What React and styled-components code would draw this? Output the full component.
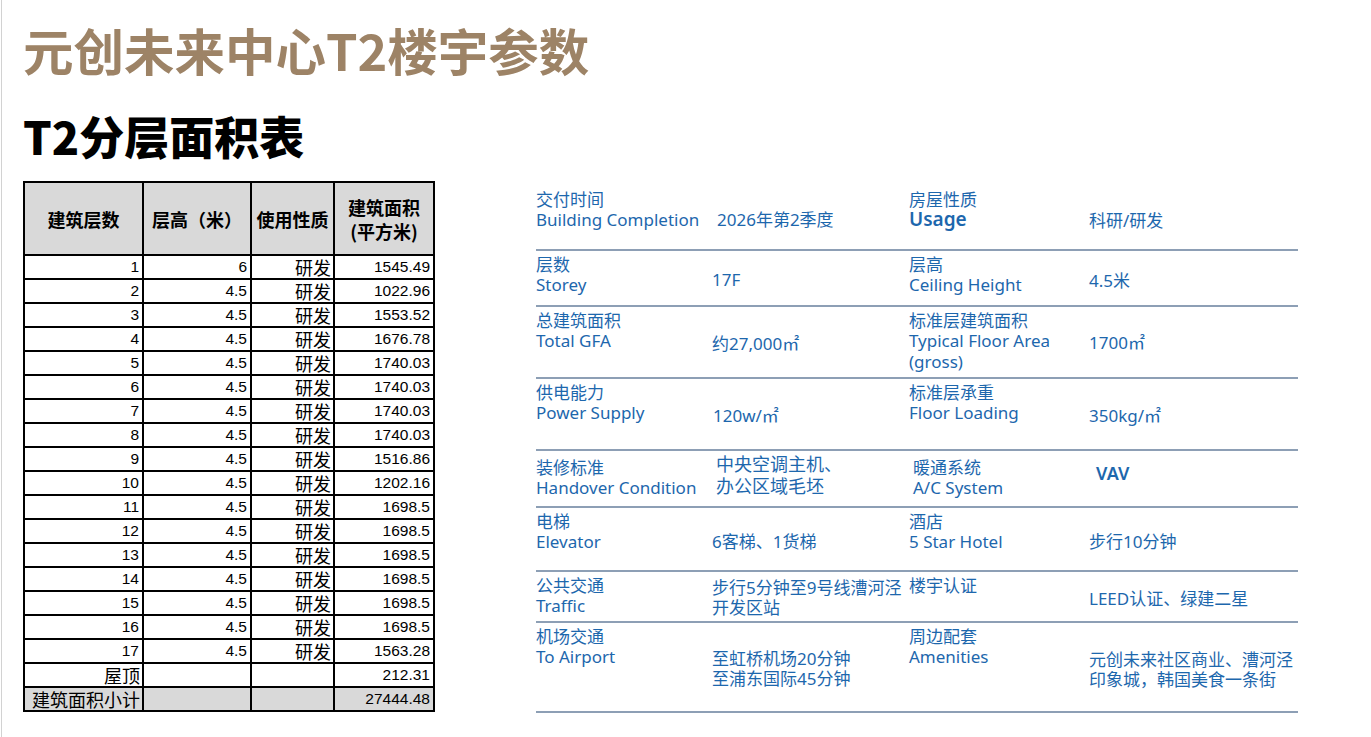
import styled, { createGlobalStyle } from "styled-components"

const GlobalStyle = createGlobalStyle`
    body {
        margin: 0;
        background: #FFFFFF;
        font-family: "Noto Sans", "Noto Sans CJK SC", sans-serif;
    }
`

const floors = [
    ["1", "6", "1545.49"],
    ["2", "4.5", "1022.96"],
    ["3", "4.5", "1553.52"],
    ["4", "4.5", "1676.78"],
    ["5", "4.5", "1740.03"],
    ["6", "4.5", "1740.03"],
    ["7", "4.5", "1740.03"],
    ["8", "4.5", "1740.03"],
    ["9", "4.5", "1516.86"],
    ["10", "4.5", "1202.16"],
    ["11", "4.5", "1698.5"],
    ["12", "4.5", "1698.5"],
    ["13", "4.5", "1698.5"],
    ["14", "4.5", "1698.5"],
    ["15", "4.5", "1698.5"],
    ["16", "4.5", "1698.5"],
    ["17", "4.5", "1563.28"],
]

const params = [
    {
        h: 63, pt: 0,
        a: { cn: "交付时间", en: "Building Completion" },
        av: { lines: ["2026年第2季度"], t: 21, l: 6 },
        b: { cn: "房屋性质", en: "Usage", big: true },
        bv: { lines: ["科研/研发"], t: 22 },
    },
    {
        h: 56,
        a: { cn: "层数", en: "Storey" },
        av: { lines: ["17F"], t: 16, l: 1 },
        b: { cn: "层高", en: "Ceiling Height" },
        bv: { lines: ["4.5米"], t: 17 },
    },
    {
        h: 72,
        a: { cn: "总建筑面积", en: "Total GFA" },
        av: { lines: ["约27,000㎡"], t: 24, l: 1 },
        b: { cn: "标准层建筑面积", en: "Typical Floor Area", en2: "(gross)" },
        bv: { lines: ["1700㎡"], t: 23 },
    },
    {
        h: 72,
        a: { cn: "供电能力", en: "Power Supply" },
        av: { lines: ["120w/㎡"], t: 24, l: 2 },
        b: { cn: "标准层承重", en: "Floor Loading" },
        bv: { lines: ["350kg/㎡"], t: 24 },
    },
    {
        h: 57,
        a: { cn: "装修标准", en: "Handover Condition", t: 3 },
        av: { lines: ["中央空调主机、", "办公区域毛坯"], t: 0, l: 5, big: true },
        b: { cn: "暖通系统", en: "A/C System", t: 3, l: 4 },
        bv: { lines: ["VAV"], t: 9, l: 7, big: true, bold: true },
    },
    {
        h: 64,
        a: { cn: "电梯", en: "Elevator" },
        av: { lines: ["6客梯、1货梯"], t: 21, l: 1 },
        b: { cn: "酒店", en: "5 Star Hotel" },
        bv: { lines: ["步行10分钟"], t: 21 },
    },
    {
        h: 51,
        a: { cn: "公共交通", en: "Traffic" },
        av: { lines: ["步行5分钟至9号线漕河泾", "开发区站"], t: 4, l: 1, lh: 20 },
        b: { cn: "楼宇认证" },
        bv: { lines: ["LEED认证、绿建二星"], t: 14 },
    },
    {
        h: 90,
        a: { cn: "机场交通", en: "To Airport" },
        av: { lines: ["至虹桥机场20分钟", "至浦东国际45分钟"], t: 24, l: 1, lh: 20 },
        b: { cn: "周边配套", en: "Amenities" },
        bv: { lines: ["元创未来社区商业、漕河泾", "印象城，韩国美食一条街"], t: 25, lh: 20 },
    },
]

function Label({ data }) {
    return (
        <LabelBox $t={data.t || 0} $l={data.l || 0}>
            <Cn>{data.cn}</Cn>
            {data.en && <En $big={data.big}>{data.en}</En>}
            {data.en2 && <En>{data.en2}</En>}
        </LabelBox>
    )
}

function Value({ data }) {
    return (
        <ValueBox $t={data.t} $l={data.l || 0} $big={data.big} $bold={data.bold} $lh={data.lh || 22}>
            {data.lines.map((l) => <div key={l}>{l}</div>)}
        </ValueBox>
    )
}

export default function App() {
    return (
        <>
            <GlobalStyle />
            <Page>
                <Titulo>元创未来中心T2楼宇参数</Titulo>
                <Main>
                    <Esquerda>
                        <Subtitulo>T2分层面积表</Subtitulo>
                        <Tabela>
                            <Cabecalho>建筑层数</Cabecalho>
                            <Cabecalho>层高（米）</Cabecalho>
                            <Cabecalho>使用性质</Cabecalho>
                            <Cabecalho>建筑面积<br />(平方米)</Cabecalho>
                            {floors.map(([f, h, a]) => (
                                <Linha key={f}>
                                    <Celula>{f}</Celula>
                                    <Celula>{h}</Celula>
                                    <Celula $cjk>研发</Celula>
                                    <Celula>{a}</Celula>
                                </Linha>
                            ))}
                            <Celula $cjk>屋顶</Celula>
                            <Celula />
                            <Celula />
                            <Celula>212.31</Celula>
                            <Celula $cjk $shade>建筑面积小计</Celula>
                            <Celula $shade />
                            <Celula $shade />
                            <Celula $shade>27444.48</Celula>
                        </Tabela>
                    </Esquerda>
                    <Info>
                        {params.map((r, i) => (
                            <InfoRow key={i} $h={r.h} $pt={r.pt === undefined ? 2 : r.pt}>
                                <Label data={r.a} />
                                <Value data={r.av} />
                                <Label data={r.b} />
                                <Value data={r.bv} />
                            </InfoRow>
                        ))}
                    </Info>
                </Main>
            </Page>
        </>
    )
}

const Page = styled.div`
    min-height: 737px;
    box-sizing: border-box;
    margin-left: 1px;
    border-left: 1px solid #d2d2d2;
    padding: 19px 0 0 21px;
    display: flex;
    flex-direction: column;
`
const Titulo = styled.div`
    font-family: "Noto Sans CJK SC", sans-serif;
    font-size: 50.5px;
    font-weight: 700;
    line-height: 61px;
    color: #9d8366;
    white-space: nowrap;
`
const Main = styled.div`
    display: flex;
    align-items: flex-start;
    gap: 101px;
    margin-top: 29px;
`
const Esquerda = styled.div`
    display: flex;
    flex-direction: column;
`
const Subtitulo = styled.div`
    font-family: "Noto Sans CJK SC", sans-serif;
    font-size: 45px;
    font-weight: 900;
    line-height: 54px;
    color: #000000;
    white-space: nowrap;
    margin-bottom: 18px;
`
const Tabela = styled.div`
    display: grid;
    grid-template-columns: 117px 106px 81px 98px;
    grid-template-rows: 71px;
    grid-auto-rows: 22px;
    gap: 2px;
    padding: 2px;
    background-color: #000000;
    width: fit-content;
`
const Linha = styled.div`
    display: contents;
`
const Cabecalho = styled.div`
    background-color: #d9d9d9;
    font-family: "Noto Sans CJK SC", sans-serif;
    font-size: 18px;
    font-weight: 700;
    line-height: 24px;
    color: #000000;
    display: flex;
    align-items: center;
    justify-content: center;
    text-align: center;
    white-space: nowrap;
`
const Celula = styled.div`
    background-color: ${(p) => (p.$shade ? "#d9d9d9" : "#ffffff")};
    font-family: ${(p) => (p.$cjk ? '"Noto Sans CJK SC", sans-serif' : '"Liberation Sans", sans-serif')};
    font-size: ${(p) => (p.$cjk ? "18px" : "15.5px")};
    line-height: 22px;
    color: #000000;
    display: flex;
    align-items: center;
    justify-content: flex-end;
    padding-right: ${(p) => (p.$cjk ? "2px" : "3px")};
    white-space: nowrap;
`
const Info = styled.div`
    display: flex;
    flex-direction: column;
    width: 762px;
    margin-top: 79px;
`
const InfoRow = styled.div`
    display: grid;
    grid-template-columns: 175px 198px 180px 1fr;
    align-items: start;
    box-sizing: border-box;
    height: ${(p) => p.$h}px;
    padding-top: ${(p) => p.$pt}px;
    border-bottom: 2px solid #8d9fb5;
    color: #1d67ad;
`
const LabelBox = styled.div`
    margin-top: ${(p) => p.$t}px;
    padding-left: ${(p) => p.$l}px;
    font-size: 17px;
    line-height: 21px;
    white-space: nowrap;
`
const Cn = styled.div`
    font-family: "Noto Sans CJK SC", sans-serif;
`
const En = styled.div`
    font-family: "Noto Sans", "Noto Sans CJK SC", sans-serif;
    font-size: ${(p) => (p.$big ? "19px" : "17px")};
    font-weight: ${(p) => (p.$big ? 600 : 400)};
`
const ValueBox = styled.div`
    margin-top: ${(p) => p.$t}px;
    padding-left: ${(p) => p.$l}px;
    font-family: "Noto Sans", "Noto Sans CJK SC", sans-serif;
    font-size: ${(p) => (p.$big ? "18px" : "17px")};
    font-weight: ${(p) => (p.$bold ? 600 : 400)};
    line-height: ${(p) => p.$lh}px;
    white-space: nowrap;
`
